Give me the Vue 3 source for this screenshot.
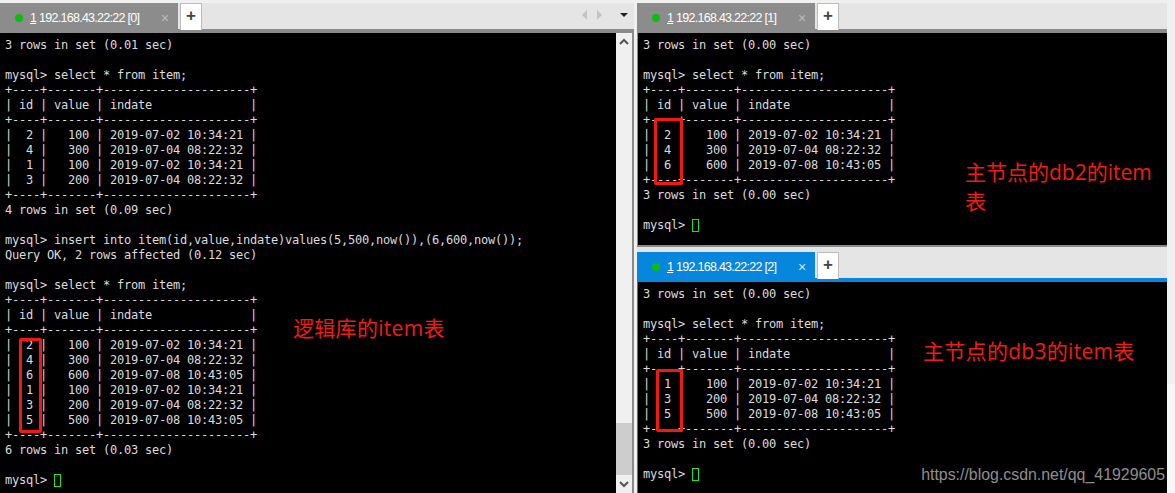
<script setup>
const sep = '+----+-------+---------------------+'
const head = '| id | value | indate              |'
const row = (id, v, d) => `|  ${id} |   ${v} | ${d} |`
const a = '2019-07-02 10:34:21', b = '2019-07-04 08:22:32', c = '2019-07-08 10:43:05'

const leftLines = [
  '3 rows in set (0.01 sec)', '', 'mysql> select * from item;', sep, head, sep,
  row(2, 100, a), row(4, 300, b), row(1, 100, a), row(3, 200, b), sep,
  '4 rows in set (0.09 sec)', '',
  'mysql> insert into item(id,value,indate)values(5,500,now()),(6,600,now());',
  'Query OK, 2 rows affected (0.12 sec)', '',
  'mysql> select * from item;', sep, head, sep,
  row(2, 100, a), row(4, 300, b), row(6, 600, c), row(1, 100, a), row(3, 200, b), row(5, 500, c), sep,
  '6 rows in set (0.03 sec)', ''
]
const topLines = [
  '3 rows in set (0.00 sec)', '', 'mysql> select * from item;', sep, head, sep,
  row(2, 100, a), row(4, 300, b), row(6, 600, c), sep, '3 rows in set (0.00 sec)', ''
]
const bottomLines = [
  '3 rows in set (0.00 sec)', '', 'mysql> select * from item;', sep, head, sep,
  row(1, 100, a), row(3, 200, b), row(5, 500, c), sep, '3 rows in set (0.00 sec)', ''
]
</script>

<template>
  <div class="desk">
    <section class="pane left">
      <header class="bar">
        <div class="tab">
          <i class="dot"></i><span class="label"><u>1</u> 192.168.43.22:22 [0]</span><span class="close">×</span>
        </div>
        <div class="plus">+</div>
        <div class="nav">
          <svg width="56" height="14" viewBox="0 0 56 14">
            <path d="M5 2 L0 7 L5 12 Z" fill="#c4c4c4" />
            <path d="M15 2 L20 7 L15 12 Z" fill="#c4c4c4" />
            <path d="M38 5 H46 L42 9 Z" fill="#222" />
          </svg>
        </div>
      </header>
      <div class="body">
        <div class="term">
          <div v-for="(l, i) in leftLines" :key="i" class="line">{{ l }}</div>
          <div class="line">mysql&gt; <span class="cursor"></span></div>
          <div class="box box-left"></div>
          <div class="note note-left">逻辑库的item表</div>
        </div>
        <div class="scroll">
          <svg class="arrow" width="12" height="8" viewBox="0 0 12 8"><path d="M2 6 L6 2 L10 6" fill="none" stroke="#555" stroke-width="2" /></svg>
          <div class="track"><div class="thumb"></div></div>
          <svg class="arrow" width="12" height="8" viewBox="0 0 12 8"><path d="M2 2 L6 6 L10 2" fill="none" stroke="#555" stroke-width="2" /></svg>
        </div>
      </div>
    </section>

    <div class="column">
      <section class="pane top">
        <header class="bar">
          <div class="tab">
            <i class="dot"></i><span class="label"><u>1</u> 192.168.43.22:22 [1]</span><span class="close">×</span>
          </div>
          <div class="plus">+</div>
        </header>
        <div class="term">
          <div v-for="(l, i) in topLines" :key="i" class="line">{{ l }}</div>
          <div class="line">mysql&gt; <span class="cursor"></span></div>
          <div class="box box-top"></div>
          <div class="note note-top">主节点的db2的item<br />表</div>
        </div>
      </section>

      <section class="pane bottom">
        <header class="bar active">
          <div class="tab">
            <i class="dot"></i><span class="label"><u>1</u> 192.168.43.22:22 [2]</span><span class="close">×</span>
          </div>
          <div class="plus">+</div>
        </header>
        <div class="term">
          <div v-for="(l, i) in bottomLines" :key="i" class="line">{{ l }}</div>
          <div class="line">mysql&gt; <span class="cursor"></span></div>
          <div class="box box-bottom"></div>
          <div class="note note-bottom">主节点的db3的item表</div>
          <div class="mark">https://blog.csdn.net/qq_41929605</div>
        </div>
      </section>
    </div>
    <div class="edge"></div>
  </div>
</template>

<style>
html, body { margin: 0; overflow: hidden; background: #f0f0f0; }
</style>

<style scoped>
.desk {
  display: flex;
  width: 1175px;
  height: 493px;
  overflow: hidden;
  background: #f0f0f0;
}
.pane { display: flex; flex-direction: column; }
.left { width: 634px; flex: none; margin-right: 3px; height: 493px; }
.column { width: 530px; flex: none; display: flex; flex-direction: column; }
.edge {
  flex: 1;
  background: linear-gradient(#f0f0f0 0 384px, #f7f7f7 384px);
}
.top { height: 247px; flex: none; }
.bottom { flex: 1; min-height: 0; }

.bar {
  position: relative;
  flex: none;
  box-sizing: border-box;
  height: 33px;
  padding-top: 3px;
  display: flex;
  align-items: flex-start;
  background: linear-gradient(#f0f0f0 0 3px, #e5e5e5 3px);
  border-bottom: 4px solid #8a8a8a;
}
.tab {
  box-sizing: border-box;
  width: 178px;
  height: 30px;
  flex: none;
  display: flex;
  align-items: center;
  padding: 0 0 0 15px;
  background: #8c8c8c;
  color: #fff;
  font: 12.5px/15px "Liberation Sans", sans-serif;
  letter-spacing: -0.72px;
}
.dot {
  width: 8px;
  height: 8px;
  border-radius: 50%;
  background: #0dbb12;
  margin-right: 7px;
  flex: none;
}
.label { white-space: nowrap; flex: none; width: 131px; }
.close { color: #bdbdbd; font-size: 14px; }
.plus {
  box-sizing: border-box;
  width: 22px;
  height: 27px;
  margin-left: 2px;
  flex: none;
  background: #fff;
  border: 1px solid #bcbcbc;
  border-bottom: none;
  text-align: center;
  color: #444;
  font: bold 17px/24px "Liberation Sans", sans-serif;
}
.nav { position: absolute; left: 582px; top: 8px; height: 14px; }

.bottom .bar {
  height: 35px;
  padding-top: 5px;
  background: #e5e5e5;
  border-bottom-color: #0686dc;
}
.bottom .tab { background: #0686dc; }
.bottom .close { color: #cfe6f7; }

.body { flex: 1; min-height: 0; display: flex; }
.term {
  position: relative;
  flex: 1;
  min-width: 0;
  box-sizing: border-box;
  padding: 5px 0 0 5px;
  background: #000;
  color: #dcdcdc;
  font: 12px/15px "DejaVu Sans Mono", "Liberation Mono", monospace;
  letter-spacing: -0.224px;
  overflow: hidden;
}
.top .term { border-left: 1px solid #8a8a8a; border-bottom: 2px solid #8a8a8a; }
.bottom .term { border-left: 1px solid #0686dc; }
.line { height: 15px; width: max-content; white-space: pre; }
.cursor {
  display: inline-block;
  box-sizing: border-box;
  width: 7px;
  height: 13px;
  border: 1px solid #1fe01f;
  vertical-align: -3px;
}
.scroll {
  width: 16px;
  flex: none;
  background: #f0f0f0;
  border-right: 2px solid #8a8a8a;
  display: flex;
  flex-direction: column;
  align-items: center;
}
.arrow { flex: none; margin: 5px 0; }
.track { flex: 1; width: 100%; display: flex; align-items: flex-end; }
.thumb { width: 100%; height: 52px; background: #cdcdcd; }

.box {
  position: absolute;
  box-sizing: border-box;
  border: 3px solid #f01a10;
  border-radius: 2px;
}
.box-left { left: 19px; top: 305px; width: 23px; height: 95px; }
.box-top { left: 16px; top: 85px; width: 29px; height: 67px; }
.box-bottom { left: 18px; top: 87px; width: 27px; height: 63px; }

.note {
  position: absolute;
  color: #f01c10;
  font: 21px/29px "Open Sans", "Noto Sans CJK SC", sans-serif;
  letter-spacing: 0;
  white-space: nowrap;
}
.note-left { left: 293px; top: 281px; letter-spacing: 0.3px; }
.note-top { left: 327px; top: 125px; }
.note-bottom { left: 285px; top: 55px; letter-spacing: 0.3px; }
.mark {
  position: absolute;
  right: 2px;
  bottom: 8px;
  color: #8f8f8f;
  font: 15.9px/20px "Liberation Sans", sans-serif;
  letter-spacing: 0;
  white-space: nowrap;
}
</style>
